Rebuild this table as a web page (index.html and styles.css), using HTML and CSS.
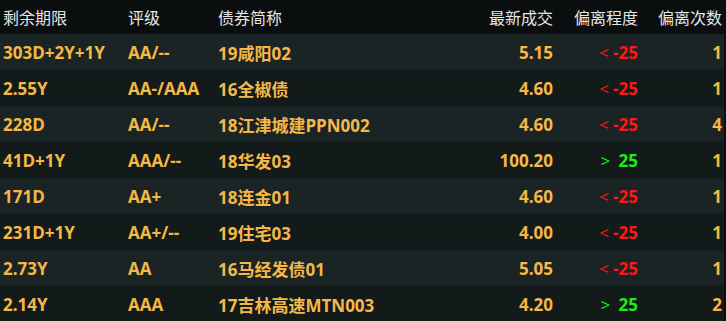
FILE: index.html
```html
<!DOCTYPE html>
<html lang="zh">
<head>
<meta charset="utf-8">
<link rel="stylesheet" href="styles.css">
</head>
<body>
<div class="table">
  <div class="row head">
    <div>剩余期限</div><div>评级</div><div>债券简称</div><div class="r">最新成交</div><div class="r">偏离程度</div><div class="r">偏离次数</div>
  </div>
  <div class="row odd">
    <div>303D+2Y+1Y</div><div>AA/--</div><div>19咸阳02</div><div class="r">5.15</div><div class="r dev down"><span class="sym">&lt;</span>-25</div><div class="r">1</div>
  </div>
  <div class="row even">
    <div>2.55Y</div><div>AA-/AAA</div><div>16全椒债</div><div class="r">4.60</div><div class="r dev down"><span class="sym">&lt;</span>-25</div><div class="r">1</div>
  </div>
  <div class="row odd">
    <div>228D</div><div>AA/--</div><div>18江津城建PPN002</div><div class="r">4.60</div><div class="r dev down"><span class="sym">&lt;</span>-25</div><div class="r">4</div>
  </div>
  <div class="row even">
    <div>41D+1Y</div><div>AAA/--</div><div>18华发03</div><div class="r">100.20</div><div class="r dev up"><span class="sym">&gt;</span> 25</div><div class="r">1</div>
  </div>
  <div class="row odd">
    <div>171D</div><div>AA+</div><div>18连金01</div><div class="r">4.60</div><div class="r dev down"><span class="sym">&lt;</span>-25</div><div class="r">1</div>
  </div>
  <div class="row even">
    <div>231D+1Y</div><div>AA+/--</div><div>19住宅03</div><div class="r">4.00</div><div class="r dev down"><span class="sym">&lt;</span>-25</div><div class="r">1</div>
  </div>
  <div class="row odd">
    <div>2.73Y</div><div>AA</div><div>16马经发债01</div><div class="r">5.05</div><div class="r dev down"><span class="sym">&lt;</span>-25</div><div class="r">1</div>
  </div>
  <div class="row even">
    <div>2.14Y</div><div>AAA</div><div>17吉林高速MTN003</div><div class="r">4.20</div><div class="r dev up"><span class="sym">&gt;</span> 25</div><div class="r">2</div>
  </div>
</div>
</body>
</html>
```
FILE: styles.css
```css
html, body {
  margin: 0;
  padding: 0;
  background: #0b0e0e;
}
body {
  width: 726px;
  height: 321px;
  overflow: hidden;
  font-family: "Open Sans", "Noto Sans CJK SC", sans-serif;
  font-size: 17px;
}
.table {
  width: 724px;
}
.row {
  display: grid;
  grid-template-columns: 125px 90px 1fr 93px 85px 84px;
  align-items: center;
  height: 36px;
  padding: 0 2px 0 3px;
  white-space: nowrap;
  color: #f5b846;
  font-weight: 700;
}
.row.head {
  height: 34px;
  background: #0b0e0e;
  color: #e6e6e6;
  font-weight: 400;
  font-size: 16px;
  font-family: "Noto Sans CJK SC", sans-serif;
}
.row.odd { background: #1b2424; }
.row.even { background: #121a1a; }
.r { text-align: right; }
.dev.down { color: #ff1616; }
.dev.up { color: #1aee1a; }
.sym {
  font-weight: 400;
  margin-right: 4px;
}
```
